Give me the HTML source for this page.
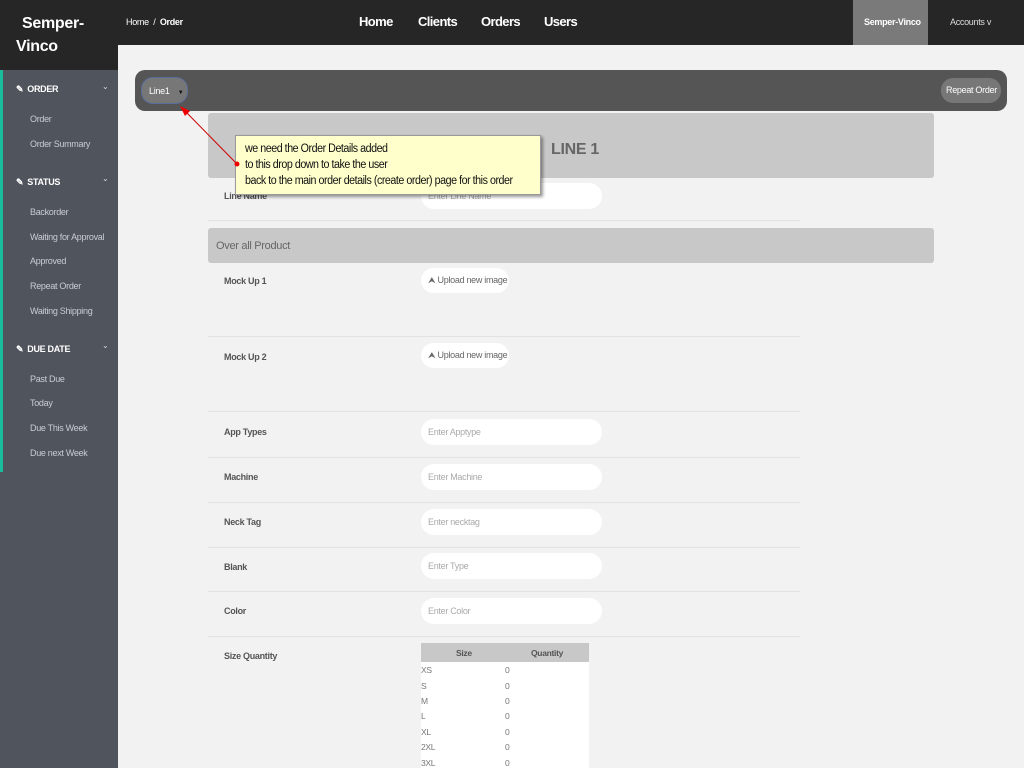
<!DOCTYPE html>
<html><head><meta charset="utf-8"><style>
*{margin:0;padding:0;box-sizing:border-box}
body{width:1024px;height:768px;overflow:hidden;background:#f2f2f2;font-family:"Liberation Sans",sans-serif;position:relative;letter-spacing:-0.3px}
.a{position:absolute;white-space:nowrap}
.top{left:0;top:0;width:1024px;height:45px;background:#262626}
.logo{left:0;top:0;width:118px;height:70px;background:#262626}
.side{left:0;top:70px;width:118px;height:698px;background:#50545c}
.green{left:0;top:70px;width:3px;height:402px;background:#1abc9c}
.nav{color:#fff;font-weight:bold;font-size:13px;top:14px;letter-spacing:-0.6px}
.sh{color:#fff;font-weight:bold;font-size:9px;left:16px}
.sh i{font-style:normal;font-size:9px;margin-right:4px}
.chev{color:#ddd;font-size:8px;left:102px}
.si{color:#c9ccd2;font-size:9px;left:30px}
.lab{color:#555;font-weight:bold;font-size:9px;left:224px}
.inp{left:421px;width:181px;height:26px;background:#fff;border-radius:13px;color:#aaa;font-size:9px;padding:8px 7px}
.sep{left:208px;width:592px;height:1px;background:#e2e2e2}
.btn{left:421px;width:88px;height:25px;background:#fff;border-radius:13px;color:#666;font-size:9px;padding:7px 7px}
.gbar{left:208px;width:726px;background:#c8c8c8;border-radius:3px}
.tr{font-size:8.5px;color:#777}
</style></head><body>
<div class="a top"></div>
<div class="a logo"></div>
<div class="a side"></div>
<div class="a green"></div>
<div class="a" style="left:22px;top:15px;color:#fff;font-weight:bold;font-size:16px">Semper-</div>
<div class="a" style="left:16px;top:38px;color:#fff;font-weight:bold;font-size:16px">Vinco</div>
<div class="a" style="left:126px;top:17px;color:#fff;font-size:9px">Home &nbsp;/ &nbsp;<b>Order</b></div>
<div class="a nav" style="left:359px">Home</div>
<div class="a nav" style="left:418px">Clients</div>
<div class="a nav" style="left:481px">Orders</div>
<div class="a nav" style="left:544px">Users</div>
<div class="a" style="left:853px;top:0;width:75px;height:45px;background:#7a7a7a"></div>
<div class="a" style="left:864px;top:17px;color:#fff;font-weight:bold;font-size:9px">Semper-Vinco</div>
<div class="a" style="left:950px;top:17px;color:#ddd;font-size:9px">Accounts v</div>

<div class="a sh" style="top:84px"><i>&#9998;</i>ORDER</div><div class="a chev" style="top:82px">&#8964;</div>
<div class="a si" style="top:114px">Order</div>
<div class="a si" style="top:139px">Order Summary</div>
<div class="a sh" style="top:177px"><i>&#9998;</i>STATUS</div><div class="a chev" style="top:174px">&#8964;</div>
<div class="a si" style="top:207px">Backorder</div>
<div class="a si" style="top:232px">Waiting for Approval</div>
<div class="a si" style="top:256px">Approved</div>
<div class="a si" style="top:281px">Repeat Order</div>
<div class="a si" style="top:306px">Waiting Shipping</div>
<div class="a sh" style="top:344px"><i>&#9998;</i>DUE DATE</div><div class="a chev" style="top:341px">&#8964;</div>
<div class="a si" style="top:374px">Past Due</div>
<div class="a si" style="top:398px">Today</div>
<div class="a si" style="top:423px">Due This Week</div>
<div class="a si" style="top:448px">Due next Week</div>

<div class="a" style="left:135px;top:70px;width:872px;height:41px;background:#555;border-radius:10px"></div>
<div class="a" style="left:141px;top:77px;width:47px;height:27px;background:#777;border:1px solid #5a6e9a;border-radius:12px;color:#fff;font-size:9px;padding:8px 7px">Line1 <span style="font-size:6px;margin-left:6px;color:#111">&#9660;</span></div>
<div class="a" style="left:941px;top:78px;width:60px;height:25px;background:#777;border-radius:12px;color:#fff;font-size:9px;padding:7px 5px">Repeat Order</div>

<div class="a gbar" style="top:113px;height:65px"></div>
<div class="a" style="left:551px;top:141px;color:#666;font-weight:bold;font-size:16px">LINE 1</div>
<div class="a lab" style="top:191px">Line Name</div>
<div class="a inp" style="top:183px">Enter Line Name</div>
<div class="a sep" style="top:220px"></div>
<div class="a gbar" style="top:228px;height:35px"></div>
<div class="a" style="left:216px;top:240px;color:#666;font-size:11px">Over all Product</div>

<div class="a lab" style="top:276px">Mock Up 1</div>
<div class="a btn" style="top:268px">&#11165; Upload new image</div>
<div class="a sep" style="top:336px"></div>
<div class="a lab" style="top:352px">Mock Up 2</div>
<div class="a btn" style="top:343px">&#11165; Upload new image</div>
<div class="a sep" style="top:411px"></div>
<div class="a lab" style="top:427px">App Types</div>
<div class="a inp" style="top:419px">Enter Apptype</div>
<div class="a sep" style="top:457px"></div>
<div class="a lab" style="top:472px">Machine</div>
<div class="a inp" style="top:464px">Enter Machine</div>
<div class="a sep" style="top:502px"></div>
<div class="a lab" style="top:517px">Neck Tag</div>
<div class="a inp" style="top:509px">Enter necktag</div>
<div class="a sep" style="top:547px"></div>
<div class="a lab" style="top:562px">Blank</div>
<div class="a inp" style="top:553px">Enter Type</div>
<div class="a sep" style="top:591px"></div>
<div class="a lab" style="top:606px">Color</div>
<div class="a inp" style="top:598px">Enter Color</div>
<div class="a sep" style="top:636px"></div>
<div class="a lab" style="top:651px">Size Quantity</div>
<div class="a" style="left:421px;top:643px;width:168px;height:125px;background:#fff"></div>
<div class="a" style="left:421px;top:643px;width:168px;height:19px;background:#c8c8c8"></div>
<div class="a" style="left:456px;top:648px;font-size:8.5px;color:#555;font-weight:bold">Size</div>
<div class="a" style="left:531px;top:648px;font-size:8.5px;color:#555;font-weight:bold">Quantity</div>
<div class="a tr" style="left:421px;top:665px">XS</div><div class="a tr" style="left:505px;top:665px">0</div>
<div class="a tr" style="left:421px;top:681px">S</div><div class="a tr" style="left:505px;top:681px">0</div>
<div class="a tr" style="left:421px;top:696px">M</div><div class="a tr" style="left:505px;top:696px">0</div>
<div class="a tr" style="left:421px;top:711px">L</div><div class="a tr" style="left:505px;top:711px">0</div>
<div class="a tr" style="left:421px;top:727px">XL</div><div class="a tr" style="left:505px;top:727px">0</div>
<div class="a tr" style="left:421px;top:742px">2XL</div><div class="a tr" style="left:505px;top:742px">0</div>
<div class="a tr" style="left:421px;top:758px">3XL</div><div class="a tr" style="left:505px;top:758px">0</div>

<div class="a" style="left:235px;top:135px;width:306px;height:60px;background:#ffffcc;border:1px solid #999;box-shadow:2px 2px 3px rgba(0,0,0,.4);padding:5px 9px;font-size:11.5px;line-height:16px;color:#111;letter-spacing:-0.5px"><div style="transform:scaleX(0.93);transform-origin:left">we need the Order Details added<br>to this drop down to take the user<br>back to the main order details (create order) page for this order</div></div>
<svg class="a" style="left:0;top:0" width="1024" height="768"><line x1="237" y1="164" x2="186" y2="112" stroke="#c00" stroke-width="1"/><polygon points="180,106 190,111 185,116" fill="#e00"/><circle cx="237" cy="164" r="2.5" fill="#e00"/></svg>
</body></html>
